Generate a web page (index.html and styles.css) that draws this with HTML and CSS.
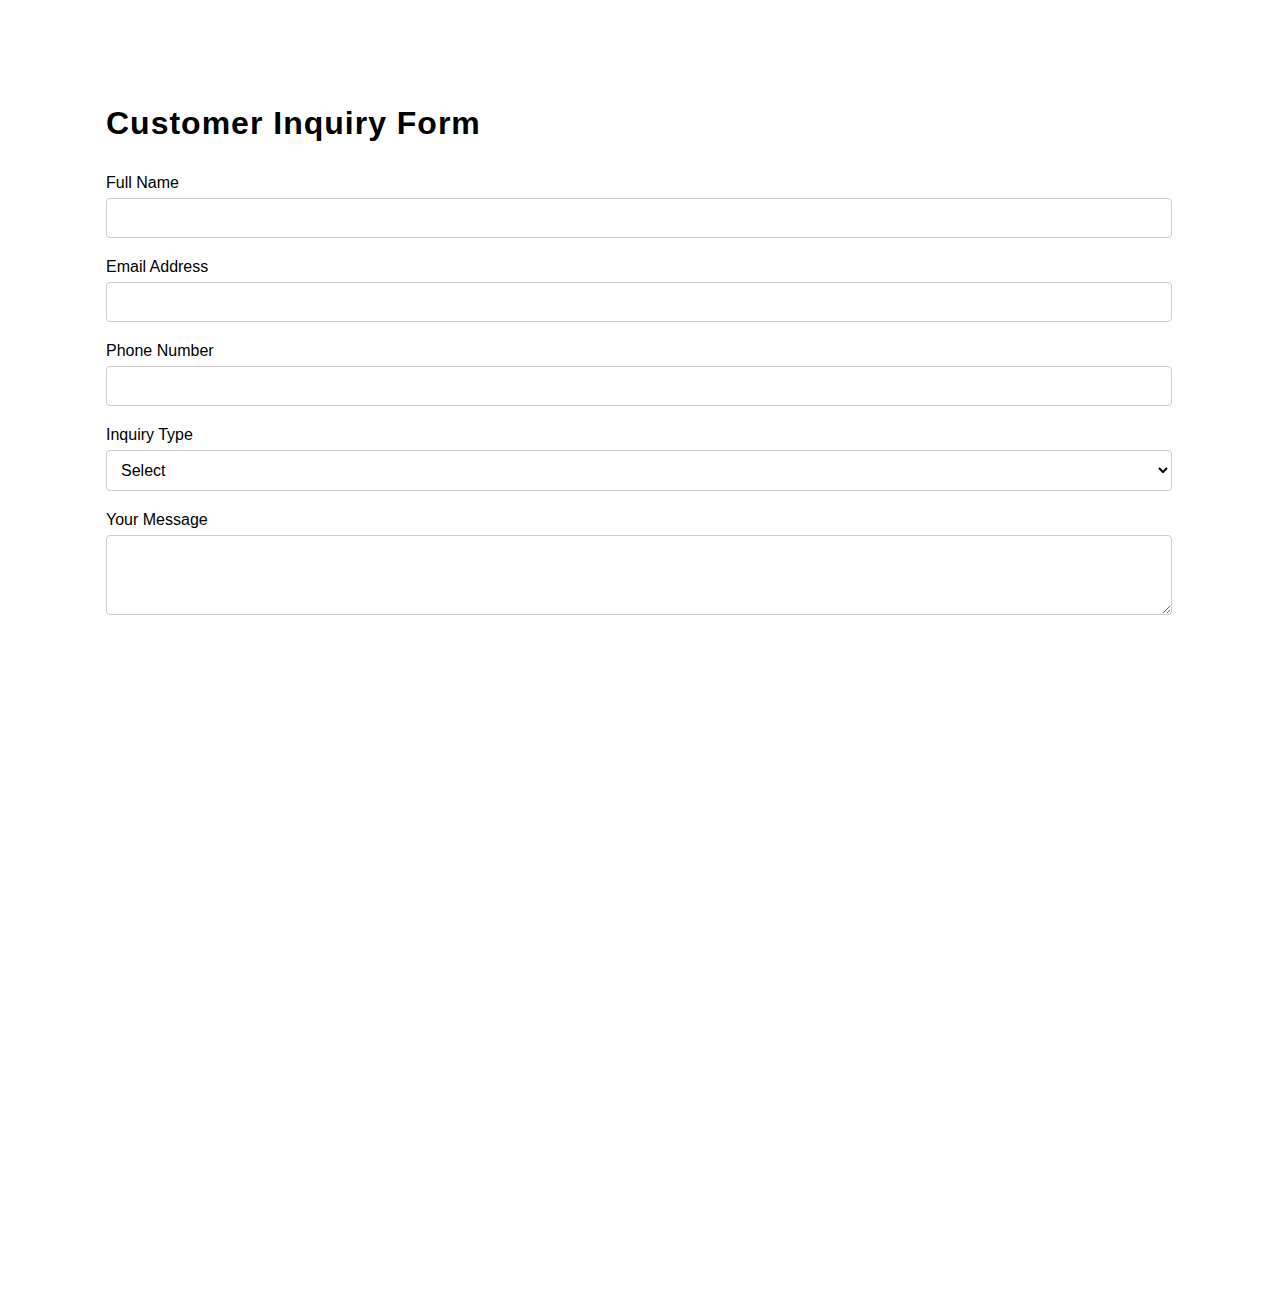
FILE: index.html
```html
<!DOCTYPE html>
<html lang="en">
<head>
    <meta charset="UTF-8">
    <title>Customer Inquiry Form</title>
    <meta name="viewport" content="width=device-width, initial-scale=1">
    <link rel="stylesheet" href="styles.css">
</head>
<body>
<div class="container">
    <h1>Customer Inquiry Form</h1>

    <form id="inquiry-form">
        <div class="field">
            <label for="full-name">Full Name</label>
            <input type="text" id="full-name" name="full_name">
        </div>
        <div class="field">
            <label for="email">Email Address</label>
            <input type="email" id="email" name="email">
        </div>
        <div class="field">
            <label for="phone">Phone Number</label>
            <input type="tel" id="phone" name="phone">
        </div>
        <div class="field">
            <label for="inquiry-type">Inquiry Type</label>
            <select id="inquiry-type" name="inquiry_type">
                <option value="">Select</option>
                <option value="sales">Sales</option>
                <option value="support">Support</option>
                <option value="billing">Billing</option>
                <option value="other">Other</option>
            </select>
        </div>
        <div class="field">
            <label for="message">Your Message</label>
            <textarea id="message" name="message"></textarea>
        </div>
    </form>
</div>
</body>
</html>
```

FILE: styles.css
```css
body {
    font-family: Arial, "Liberation Sans", sans-serif;
    margin: 0;
    background: #fff;
    color: #000;
}

.container {
    max-width: 1066px;
    margin: 0 auto;
    padding-top: 105px;
}

h1 {
    font-size: 32px;
    letter-spacing: 1px;
    margin: 0 0 32px;
}

.field {
    margin-bottom: 20px;
}

.field label {
    display: block;
    font-size: 16px;
    margin-bottom: 6px;
}

.field input,
.field select,
.field textarea {
    display: block;
    width: 100%;
    box-sizing: border-box;
    font-family: inherit;
    font-size: 16px;
    border: 1px solid #ccc;
    border-radius: 4px;
    padding: 10px;
    background: #fff;
}

.field input {
    height: 40px;
}

.field select {
    height: 41px;
    color: #000;
}

.field textarea {
    height: 80px;
}
```
